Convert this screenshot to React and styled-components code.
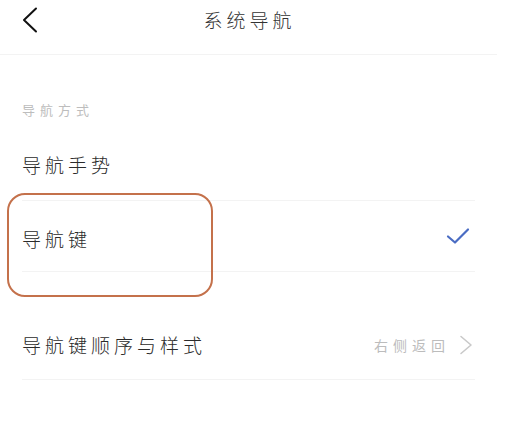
import React from 'react';
import styled, { createGlobalStyle } from 'styled-components';

const GlobalStyle = createGlobalStyle`
  html, body {
    margin: 0;
    padding: 0;
    background: #ffffff;
  }
  body {
    font-family: 'Noto Sans CJK SC', 'Noto Sans', sans-serif;
    color: #2b2b2b;
  }
`;

const Page = styled.div`
  width: 518px;
  height: 425px;
  overflow: hidden;
  background: #ffffff;
`;

const Header = styled.div`
  display: grid;
  grid-template-columns: 1fr auto 1fr;
  align-items: center;
  width: 497px;
  height: 54px;
  border-bottom: 1px solid #f3f3f3;
`;

const BackButton = styled.button`
  justify-self: start;
  display: flex;
  align-items: center;
  margin-left: 21px;
  margin-top: -14px;
  padding: 0;
  border: none;
  background: none;
`;

const Title = styled.h1`
  margin: -16px 0 0 0;
  font-size: 19px;
  font-weight: 300;
  letter-spacing: 4px;
  color: #333333;
  padding-left: 2px;
`;

const Content = styled.div`
  padding: 0 43px 0 22px;
`;

const SectionLabel = styled.div`
  margin-top: 45px;
  height: 20px;
  line-height: 20px;
  font-size: 13px;
  letter-spacing: 5px;
  color: #bdbdbd;
`;

const Group = styled.div`
  margin-top: ${(p) => p.$gap}px;
`;

const Row = styled.div`
  position: relative;
  display: flex;
  align-items: center;
  justify-content: space-between;
  height: ${(p) => p.$height}px;
  border-bottom: 1px solid #f3f3f3;
`;

const RowText = styled.span`
  font-size: 19px;
  font-weight: 300;
  letter-spacing: 4px;
  color: #2b2b2b;
  margin-top: ${(p) => p.$shift || 0}px;
`;

const Trailing = styled.div`
  display: flex;
  align-items: center;
  gap: 9px;
  margin-right: ${(p) => p.$right || 2}px;
`;

const ValueText = styled.span`
  font-size: 14px;
  letter-spacing: 5px;
  color: #bcbcbc;
`;

const Highlight = styled.div`
  position: absolute;
  left: -15px;
  top: -8px;
  width: 202px;
  height: 100px;
  border: 2px solid #c4714b;
  border-radius: 18px;
  pointer-events: none;
`;

const Check = () => (
  <svg width="24" height="18" viewBox="0 0 24 18" fill="none">
    <path d="M2 9.5 L9 15.5 L22 2.5" stroke="#4a6cc3" strokeWidth="2.2" strokeLinecap="round" strokeLinejoin="round" />
  </svg>
);

const ChevronRight = () => (
  <svg width="14" height="20" viewBox="0 0 14 20" fill="none">
    <path d="M2 1.5 L12 10 L2 18.5" stroke="#c9c9c9" strokeWidth="1.6" strokeLinecap="round" strokeLinejoin="round" />
  </svg>
);

const ChevronLeft = () => (
  <svg width="18" height="26" viewBox="0 0 18 26" fill="none">
    <path d="M15 1.5 L3 13 L15 24.5" stroke="#111111" strokeWidth="2" strokeLinecap="round" strokeLinejoin="round" />
  </svg>
);

const App = () => {
  return (
    <Page>
      <GlobalStyle />
      <Header>
        <BackButton>
          <ChevronLeft />
        </BackButton>
        <Title>系统导航</Title>
        <div />
      </Header>

      <Content>
        <SectionLabel>导航方式</SectionLabel>

        <Group $gap={10}>
          <Row $height={70}>
            <RowText $shift={-2}>导航手势</RowText>
          </Row>
          <Row $height={70}>
            <RowText $shift={4}>导航键</RowText>
            <Trailing $right={5}>
              <Check />
            </Trailing>
            <Highlight />
          </Row>
        </Group>

        <Group $gap={38}>
          <Row $height={69}>
            <RowText $shift={-1}>导航键顺序与样式</RowText>
            <Trailing $right={2}>
              <ValueText>右侧返回</ValueText>
              <ChevronRight />
            </Trailing>
          </Row>
        </Group>
      </Content>
    </Page>
  );
};

export default App;
